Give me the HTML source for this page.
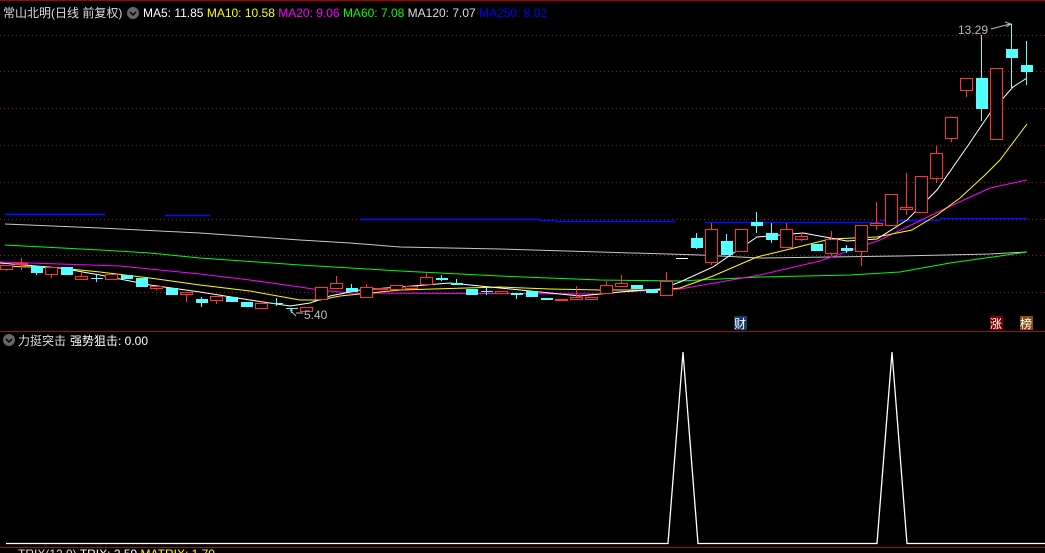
<!DOCTYPE html>
<html><head><meta charset="utf-8"><style>
html,body{margin:0;padding:0;background:#000;width:1045px;height:553px;overflow:hidden}
svg{position:absolute;left:0;top:0}
text{font-family:"Liberation Sans","Noto Sans CJK SC",sans-serif}
</style></head><body>
<svg id="s" width="1045" height="553" xmlns="http://www.w3.org/2000/svg">
<rect width="1045" height="553" fill="#000"/>
<line x1="0" y1="0.5" x2="1045" y2="0.5" stroke="#a00" />
<g id="grid" stroke="#8b1a1a" stroke-dasharray="1,3"></g>
<line x1="0" y1="331.5" x2="1045" y2="331.5" stroke="#a01010"/>
<line x1="0" y1="547.5" x2="1045" y2="547.5" stroke="#a01010"/>
<g id="ma" fill="none" stroke-width="1"></g>
<g id="c"></g>
<text x="3" y="17" font-size="12" fill="#ddd">常山北明(日线 前复权)</text>
<circle cx="133" cy="13" r="6" fill="#666"/><path d="M130 12l3 3 3-3" stroke="#000" fill="none" stroke-width="1.5"/>
<text x="143" y="17" font-size="12"><tspan fill="#fff">MA5: 11.85 </tspan><tspan fill="#ff0">MA10: 10.58 </tspan><tspan fill="#f0f">MA20: 9.06 </tspan><tspan fill="#0f0">MA60: 7.08 </tspan><tspan fill="#ddd">MA120: 7.07 </tspan><tspan fill="#00f">MA250: 8.02</tspan></text>
<text x="958" y="34" font-size="12" fill="#bbb">13.29</text>
<path d="M991 29 L1010 24 M1005 22 L1011 24 L1006 27" stroke="#bbb" fill="none"/>
<path d="M290 310 L296 316 M290 310 L293 310 M296 313 L303 313" stroke="#bbb" fill="none"/>
<text x="304" y="319" font-size="12" fill="#bbb">5.40</text>
<rect x="734" y="316" width="13" height="14" fill="#1a3c6c"/><text x="734" y="328" font-size="12" fill="#fff">财</text>
<rect x="990" y="316" width="13" height="14" fill="#800000"/><text x="990" y="328" font-size="12" fill="#fff">涨</text>
<rect x="1020" y="316" width="13" height="14" fill="#8b4a10"/><text x="1020" y="328" font-size="12" fill="#fff">榜</text>
<circle cx="9" cy="340" r="6" fill="#666"/><path d="M6 339l3 3 3-3" stroke="#000" fill="none" stroke-width="1.5"/>
<text x="18" y="345" font-size="12" fill="#ddd">力挺突击</text>
<text x="70" y="345" font-size="12" fill="#fff">强势狙击: 0.00</text>
<polyline points="6,543.5 668,543.5 683,352 698,543.5 877,543.5 892,352 907,543.5 1045,543.5" stroke="#fff" fill="none" stroke-width="1.3"/>
<text x="18" y="558" font-size="12"><tspan fill="#ddd">TRIX(12,9) </tspan><tspan fill="#fff">TRIX: 2.59 </tspan><tspan fill="#ff0">MATRIX: 1.70</tspan></text>
</svg>
<script>
var NS="http://www.w3.org/2000/svg";
function el(p,t,a){var e=document.createElementNS(NS,t);for(var k in a)e.setAttribute(k,a[k]);p.appendChild(e);return e;}
var g=document.getElementById('grid');
[35,71,108,145,182,219,255,292].forEach(function(y){el(g,'line',{x1:0,y1:y+.5,x2:1045,y2:y+.5});});
var m=document.getElementById('ma');
function pl(c,pts){el(m,'polyline',{points:pts,stroke:c});}
pl('#0000ff','5,214 105,214 M0,0');
[[5,105,214],[165,210,215],[360,540,219],[540,555,220],[555,675,221],[705,880,222],[880,940,220],[940,1027,218]].forEach(function(s){el(m,'line',{x1:s[0],y1:s[2]+.5,x2:s[1],y2:s[2]+.5,stroke:'#0010ff','stroke-width':1.5});});
pl('#c8c8c8','5,224 100,228 200,233 300,240 350,243 400,247 500,249 600,252 700,255 760,258 830,257 900,256 990,254 1027,252');
pl('#00ff00','5,245 100,250 150,253 200,258 300,265 400,271 500,276 600,280 680,281 760,277 850,275 900,272 950,263 1000,256 1027,252');
pl('#ff00ff','0,262 60,264 120,266 150,269 200,274 250,280 300,287 320,290 350,293 600,294 620,292 680,289 760,275 820,261 880,240 940,211 990,188 1027,180');
pl('#ffff00','0,266 60,268 100,272 150,278 200,285 250,291 300,300 320,300 340,296 400,290 500,287 550,289 600,290 660,290 680,288 713,276 757,257 790,249 830,239 877,237 912,230 937,215 960,198 985,175 1000,160 1027,124');
pl('#ffffff','0,263 60,268 100,275 150,285 200,292 250,300 290,306 310,303 330,296 360,290 400,287 450,283 500,288 550,293 580,296 620,292 660,289 680,282 713,267 757,237 803,233 847,241 877,239 907,220 937,190 967,147 990,113 1013,87 1027,78');
// [index, color r/c/w, top, bottom, high, low]
var C=[[0,'r',265,269,265,271],[1,'r',263,264,258,270],[2,'c',266,273,266,275],[3,'r',267,274,267,278],[4,'c',267,275,267,275],[5,'r',276,279,272,279],[6,'c',278,279,274,282],[7,'r',274,279,274,279],[8,'c',275,279,275,279],[9,'c',278,287,278,287],[10,'r',286,288,286,290],[11,'c',288,295,288,295],[12,'r',292,294,292,302],[13,'c',299,303,297,307],[14,'r',296,300,296,304],[15,'c',297,302,297,302],[16,'c',302,307,302,307],[17,'r',303,308,303,308],[18,'c',303,304,298,306],[19,'c',308,309,308,313],[20,'r',307,311,307,311],[21,'r',287,299,287,299],[22,'r',283,288,276,288],[23,'c',288,292,284,292],[24,'r',287,297,284,297],[25,'r',288,289,288,289],[26,'r',285,289,285,289],[27,'r',286,288,286,288],[28,'r',277,284,272,284],[29,'c',278,280,275,281],[30,'c',283,285,279,285],[31,'c',289,295,289,295],[32,'c',291,292,286,295],[33,'r',291,293,291,293],[34,'c',293,295,293,299],[35,'c',291,297,291,297],[36,'c',298,300,298,300],[37,'r',299,300,299,301],[38,'r',297,299,286,299],[39,'r',297,299,297,299],[40,'r',285,293,281,293],[41,'r',283,286,275,286],[42,'c',285,289,285,289],[43,'c',289,293,289,293],[44,'r',281,295,272,295],[45,'w',258,259,258,259],[46,'c',238,248,233,249],[47,'r',229,262,223,265],[48,'c',241,255,234,255],[49,'r',229,251,229,251],[50,'c',222,226,212,233],[51,'c',233,240,223,243],[52,'r',229,247,223,247],[53,'r',236,239,232,241],[54,'c',244,251,244,251],[55,'r',239,253,231,256],[56,'c',248,251,245,253],[57,'r',225,251,225,266],[58,'r',223,225,202,230],[59,'r',194,225,194,225],[60,'r',207,209,173,215],[61,'r',176,212,176,212],[62,'r',153,178,146,183],[63,'r',117,138,117,142],[64,'r',78,90,78,97],[65,'c',78,109,35,121],[66,'r',68,139,68,139],[67,'c',49,58,24,89],[68,'c',65,72,41,85]];
var cg=document.getElementById('c');
C.forEach(function(d){var x=6+15*d[0],col=d[1]=='r'?'#ff3232':d[1]=='c'?'#54ffff':'#fff';
 el(cg,'line',{x1:x+.5,y1:d[4],x2:x+.5,y2:d[5],stroke:col});
 var h=Math.max(d[3]-d[2],1);
 if(d[1]=='r'){el(cg,'rect',{x:x-5.5,y:d[2]+.5,width:12,height:h,fill:'#000',stroke:col});}
 else{el(cg,'rect',{x:x-5,y:d[2],width:12,height:h,fill:col});}
});
</script>
</body></html>
